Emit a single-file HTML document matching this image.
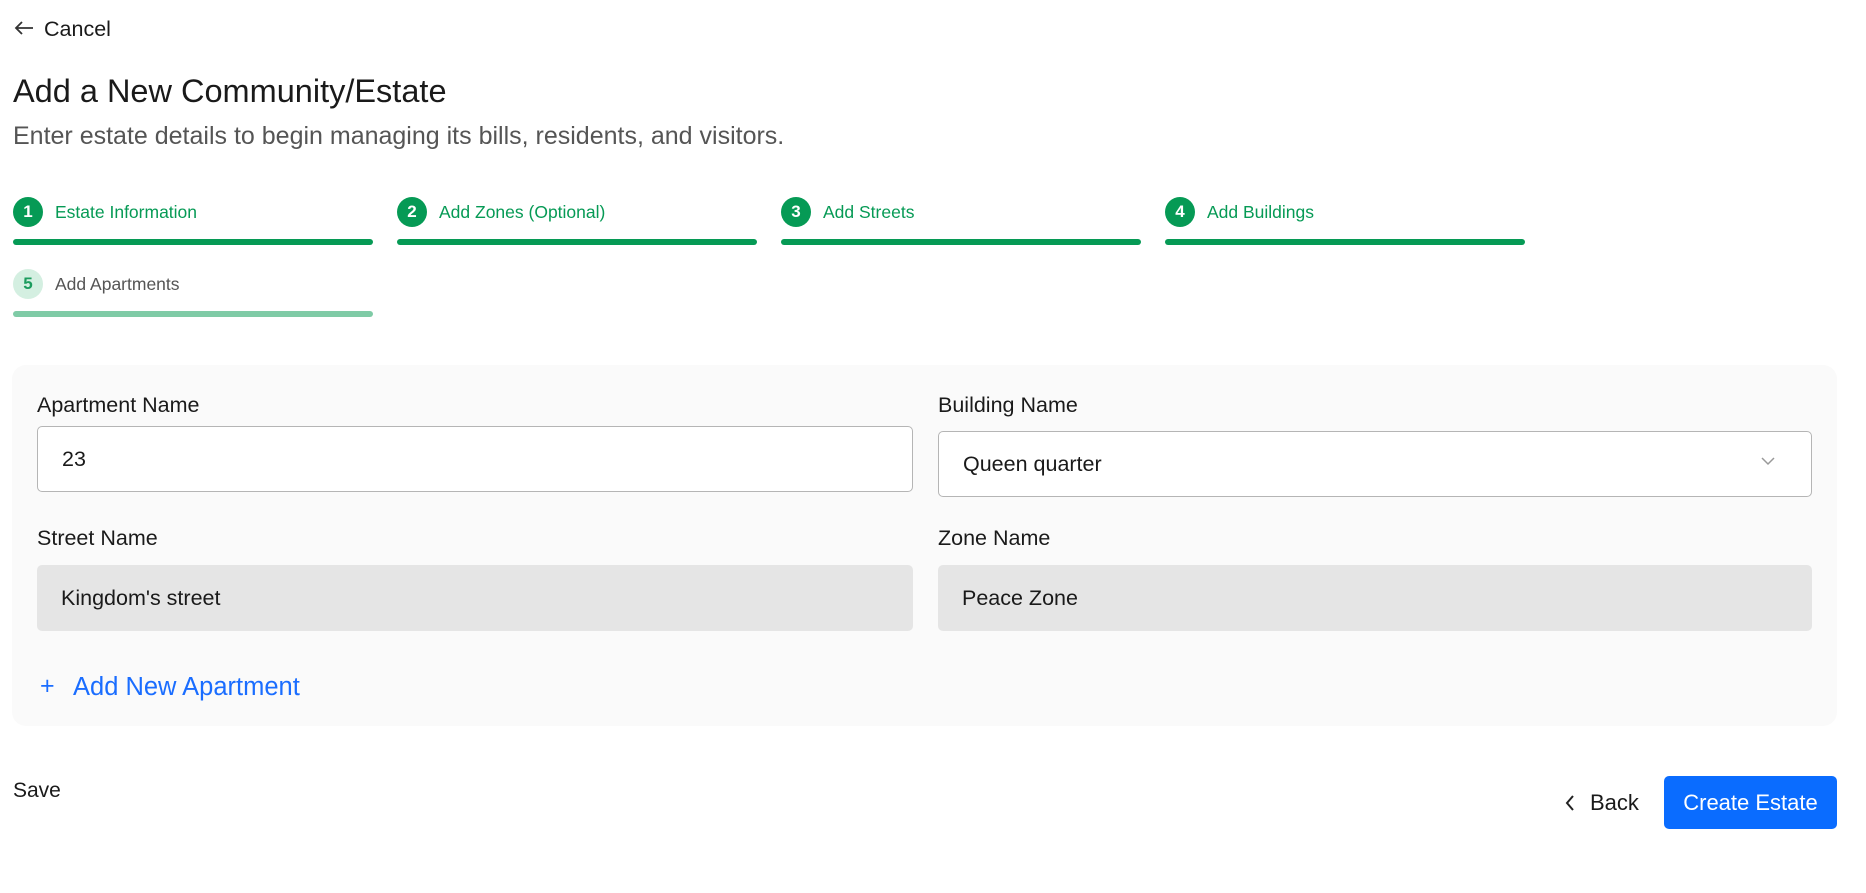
<!DOCTYPE html>
<html><head><meta charset="utf-8"><style>
*{box-sizing:border-box;margin:0;padding:0}
body{width:1866px;height:893px;background:#fff;font-family:"Liberation Sans",sans-serif;color:#1a1a1a;position:relative;overflow:hidden}
.a{position:absolute;white-space:nowrap}
.circ{position:absolute;width:30px;height:30px;border-radius:50%;background:#069a55;color:#fff;font-weight:bold;font-size:17px;text-align:center;line-height:30px}
.slab{position:absolute;font-size:17.5px;color:#069a55;line-height:20px}
.bar{position:absolute;height:6px;border-radius:3px;background:#069a55;width:360px}
.lbl{position:absolute;font-size:21.5px;color:#1a1a1a;line-height:24px}
.inp{position:absolute;border:1.5px solid #b5b5b5;border-radius:5px;background:#fff;font-size:21.5px;line-height:24px;padding-left:24px;display:flex;align-items:center}
.gray{position:absolute;border-radius:5px;background:#e5e5e5;font-size:21.5px;padding-left:24px;display:flex;align-items:center}
</style></head><body>
<svg class="a" style="left:14px;top:20px" width="20" height="16" viewBox="0 0 20 16"><path d="M19 8H2M8 2L2 8l6 6" stroke="#333" stroke-width="1.8" fill="none"/></svg>
<div class="a" style="left:44px;top:17px;font-size:21.5px;line-height:24px">Cancel</div>
<div class="a" style="left:13px;top:72px;font-size:32.5px;line-height:38px;color:#1a1a1a">Add a New Community/Estate</div>
<div class="a" style="left:13px;top:122px;font-size:25px;line-height:28px;color:#555">Enter estate details to begin managing its bills, residents, and visitors.</div>

<div class="circ" style="left:13px;top:197px">1</div><div class="slab" style="left:55px;top:202px">Estate Information</div><div class="bar" style="left:13px;top:239px"></div>
<div class="circ" style="left:397px;top:197px">2</div><div class="slab" style="left:439px;top:202px">Add Zones (Optional)</div><div class="bar" style="left:397px;top:239px"></div>
<div class="circ" style="left:781px;top:197px">3</div><div class="slab" style="left:823px;top:202px">Add Streets</div><div class="bar" style="left:781px;top:239px"></div>
<div class="circ" style="left:1165px;top:197px">4</div><div class="slab" style="left:1207px;top:202px">Add Buildings</div><div class="bar" style="left:1165px;top:239px"></div>
<div class="circ" style="left:13px;top:269px;background:#d4efe1;color:#1c9c5e">5</div><div class="slab" style="left:55px;top:274px;color:#555">Add Apartments</div><div class="bar" style="left:13px;top:311px;background:#7fcba6"></div>

<div class="a" style="left:12px;top:365px;width:1825px;height:361px;background:#fafafa;border-radius:14px"></div>
<div class="lbl" style="left:37px;top:393px">Apartment Name</div>
<div class="inp" style="left:37px;top:426px;width:876px;height:66px">23</div>
<div class="lbl" style="left:938px;top:393px">Building Name</div>
<div class="inp" style="left:938px;top:431px;width:874px;height:66px">Queen quarter</div>
<svg class="a" style="left:1760px;top:456px" width="16" height="10" viewBox="0 0 16 10"><path d="M2 2l6 6 6-6" stroke="#999" stroke-width="1.5" fill="none"/></svg>
<div class="lbl" style="left:37px;top:526px">Street Name</div>
<div class="gray" style="left:37px;top:565px;width:876px;height:66px">Kingdom's street</div>
<div class="lbl" style="left:938px;top:526px">Zone Name</div>
<div class="gray" style="left:938px;top:565px;width:874px;height:66px">Peace Zone</div>
<div class="a" style="left:40px;top:672px;font-size:25px;line-height:28px;color:#1a6dff">+</div>
<div class="a" style="left:73px;top:673px;font-size:25.5px;line-height:28px;color:#1a6dff">Add New Apartment</div>

<div class="a" style="left:13px;top:779px;font-size:21px;line-height:24px">Save</div>
<svg class="a" style="left:1564px;top:794px" width="12" height="18" viewBox="0 0 12 18"><path d="M9 2L3 9l6 7" stroke="#222" stroke-width="2" fill="none"/></svg>
<div class="a" style="left:1590px;top:790px;font-size:22px;line-height:26px">Back</div>
<div class="a" style="left:1664px;top:776px;width:173px;height:53px;background:#0a6cff;border-radius:5px;color:#fff;font-size:22px;line-height:53px;text-align:center">Create Estate</div>
</body></html>
